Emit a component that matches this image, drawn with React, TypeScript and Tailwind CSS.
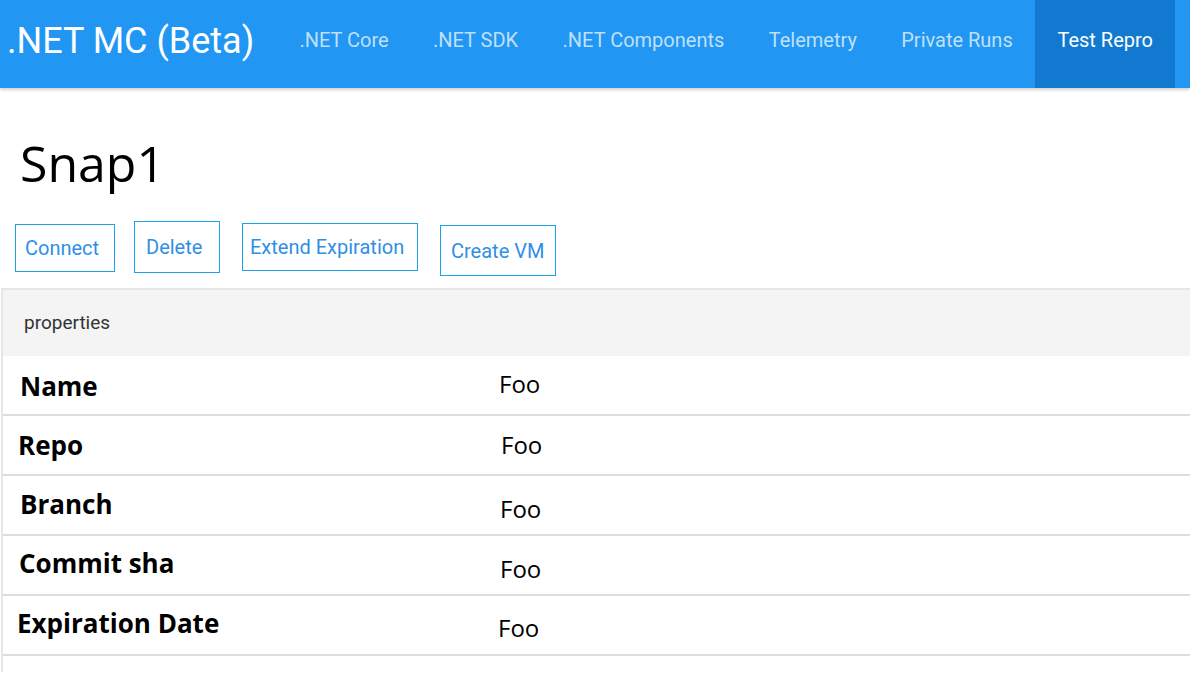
import { useState } from "react";

const navItems = [".NET Core", ".NET SDK", ".NET Components", "Telemetry", "Private Runs", "Test Repro"];

const actions = [
  { label: "Connect", cls: "ml-[15px] mt-[3px] w-[100px] h-[48px] pl-[9px]" },
  { label: "Delete", cls: "ml-[19px] mt-0 w-[86px] h-[52px] pl-[11px]" },
  { label: "Extend Expiration", cls: "ml-[22px] mt-[2px] w-[176px] h-[48px] pl-[7px]" },
  { label: "Create VM", cls: "ml-[22px] mt-[4px] w-[116px] h-[51px] pl-[10px]" },
];

// the mockup rows are not perfectly aligned, keep the small offsets
const rows = [
  { key: "Name", value: "Foo", labelCls: "pl-[17px] pt-[3px]", valueCls: "pl-[496px] -mt-[3px]" },
  { key: "Repo", value: "Foo", labelCls: "pl-[15px] pt-[1px]", valueCls: "pl-[498px] -mt-[1px]" },
  { key: "Branch", value: "Foo", labelCls: "pl-[17px] -mt-[2px]", valueCls: "pl-[497px] mt-[7px]" },
  { key: "Commit sha", value: "Foo", labelCls: "pl-[16px] -mt-[4px]", valueCls: "pl-[497px] mt-[7px]" },
  { key: "Expiration Date", value: "Foo", labelCls: "pl-[14px] -mt-[4px]", valueCls: "pl-[495px] mt-[6px]" },
];

function Header() {
  const [active, setActive] = useState("Test Repro");
  return (
    <header className="h-[88px] bg-[#2196F3] flex items-center shadow-[0_2px_3px_rgba(0,0,0,0.18)] relative z-10" style={{ fontFamily: "Roboto, sans-serif" }}>
      <div className="pl-[7px] pr-[23px] text-white text-[36px] leading-none pb-[7px]">.NET MC (Beta)</div>
      <nav className="flex h-full">
        {navItems.map((item) => (
          <button
            key={item}
            onClick={() => setActive(item)}
            className={
              item === active
                ? "h-full px-[22.5px] pb-[8px] text-[20px] text-white bg-[#1279D1]"
                : "h-full px-[22.2px] pb-[8px] text-[20px] text-[#BFE0FB]"
            }
          >
            {item}
          </button>
        ))}
      </nav>
    </header>
  );
}

export default function App() {
  return (
    <div className="min-h-screen bg-white">
      <Header />

      <h1 className="pl-[20px] pt-[45px] text-[50px] leading-[1.2] text-black" style={{ fontFamily: "'Open Sans', sans-serif" }}>
        Snap1
      </h1>

      {/* actions */}
      <div className="flex items-start h-[95px] pt-[28px]" style={{ fontFamily: "Roboto, sans-serif" }}>
        {actions.map((a) => (
          <button
            key={a.label}
            className={`${a.cls} border border-[#1AA3EC] text-[#2F8FE6] text-[20px] flex items-center justify-start`}
          >
            {a.label}
          </button>
        ))}
      </div>

      {/* properties panel */}
      <div className="ml-[1px] border-l-2 border-t-2 border-[#E6E6E6] pb-[16px]">
        <div className="h-[66px] bg-[#F4F4F4] flex items-center pl-[21px] text-[19px] text-[#333]" style={{ fontFamily: "Roboto, sans-serif" }}>
          properties
        </div>
        {rows.map((r) => (
          <div key={r.key} className="h-[60px] border-b-2 border-[#DDDDDD] flex items-center" style={{ fontFamily: "'Open Sans', sans-serif" }}>
            <div className={`w-[480px] shrink-0 text-[26px] font-bold text-black ${r.labelCls}`}>{r.key}</div>
            <div className={`text-[24px] text-black -ml-[480px] ${r.valueCls}`}>{r.value}</div>
          </div>
        ))}
      </div>
    </div>
  );
}
